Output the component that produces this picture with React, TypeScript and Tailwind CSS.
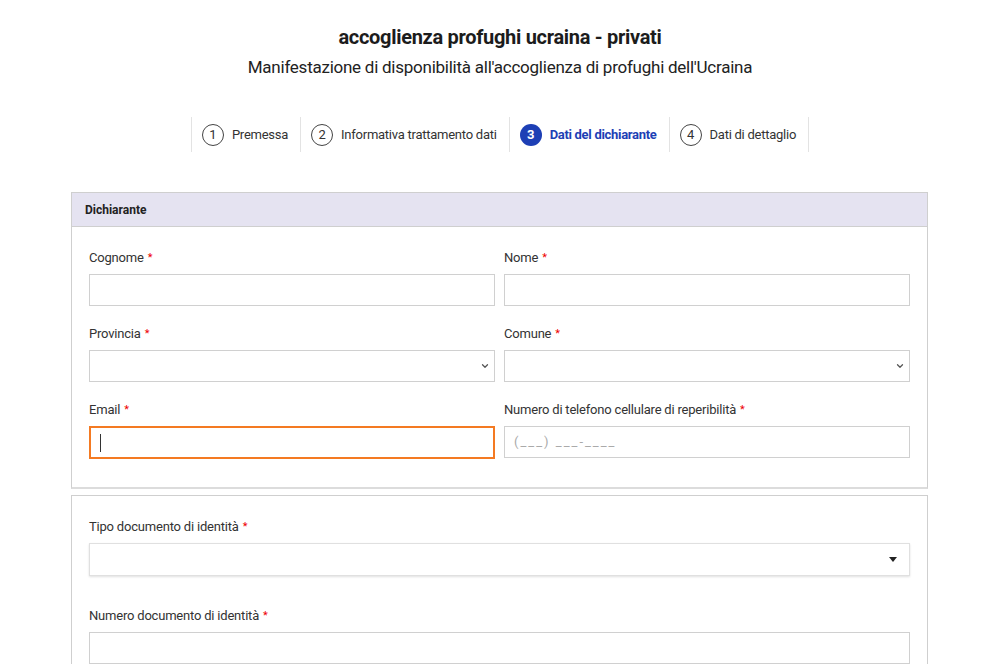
import { ChevronDown } from "lucide-react";

const font = { fontFamily: "Roboto, 'Noto Sans', sans-serif" };

const steps = [
  { n: 1, label: "Premessa" },
  { n: 2, label: "Informativa trattamento dati" },
  { n: 3, label: "Dati del dichiarante", active: true },
  { n: 4, label: "Dati di dettaglio" },
];

function Label({ text }: { text: string }) {
  return (
    <label className="block h-4 mb-2 text-[13px] leading-4 text-[#333] tracking-[-0.2px]">
      {text}
      <span className="ml-1 text-[#e00] text-[11px] align-top">*</span>
    </label>
  );
}

function Input({ focus, placeholder }: { focus?: boolean; placeholder?: string }) {
  if (focus) {
    return (
      <div className="h-[33px] border-2 border-[#f47a22] flex items-center pl-[9px]">
        <span className="w-px h-[18px] bg-[#333]" />
      </div>
    );
  }
  return (
    <div className="h-8 border border-[#d0d0d0] flex items-center pl-[9px] text-[13px] text-[#aaa] tracking-[2px]">
      {placeholder}
    </div>
  );
}

function Select() {
  return (
    <div className="h-8 border border-[#d0d0d0] flex items-center justify-end pr-1">
      <ChevronDown size={10} strokeWidth={3} className="text-[#555]" />
    </div>
  );
}

function Field({ label, children }: { label: string; children: React.ReactNode }) {
  return (
    <div className="flex-1 min-w-0">
      <Label text={label} />
      {children}
    </div>
  );
}

export default function App() {
  return (
    <div className="min-h-[668px] bg-white text-[#222]" style={font}>
      <div className="pt-[26px] text-center">
        <h1 className="text-[20px] leading-[22px] font-bold text-[#1c1c1c] tracking-[-0.3px]">
          accoglienza profughi ucraina - privati
        </h1>
        <p className="mt-[8px] text-[17px] leading-[22px] text-[#222] tracking-[-0.25px]">
          Manifestazione di disponibilità all'accoglienza di profughi dell'Ucraina
        </p>
      </div>

      <div className="mt-[39px] flex justify-center">
        <div className="flex h-[35px] border-r border-[#e3e3e3]">
          {steps.map((s) => (
            <div key={s.n} className="flex items-center gap-2 pl-[10px] pr-[12px] border-l border-[#e3e3e3]">
              <span
                className={
                  s.active
                    ? "w-[22px] h-[22px] rounded-full bg-[#1d3fb5] text-white text-[13px] font-bold flex items-center justify-center"
                    : "w-[22px] h-[22px] rounded-full border border-[#444] text-[#333] text-[13px] flex items-center justify-center"
                }
              >
                {s.n}
              </span>
              <span
                className={
                  s.active
                    ? "text-[13px] font-bold text-[#1d3fb5] tracking-[-0.3px]"
                    : "text-[13px] text-[#333] tracking-[-0.25px]"
                }
              >
                {s.label}
              </span>
            </div>
          ))}
        </div>
      </div>

      <div className="mt-[40px] ml-[71px] w-[857px]">
        <section className="border border-[#cfcfcf] border-b-2 border-b-[#dcdcdc]">
          <div className="h-[34px] bg-[#e5e3f1] border-b border-[#cfcfcf] flex items-center px-[13px] text-[12px] font-bold text-[#222]">
            Dichiarante
          </div>
          <div className="px-[17px] pt-[23px] pb-[28px] flex flex-col gap-5">
            <div className="flex gap-[9px]">
              <Field label="Cognome">
                <Input />
              </Field>
              <Field label="Nome">
                <Input />
              </Field>
            </div>
            <div className="flex gap-[9px]">
              <Field label="Provincia">
                <Select />
              </Field>
              <Field label="Comune">
                <Select />
              </Field>
            </div>
            <div className="flex gap-[9px]">
              <Field label="Email">
                <Input focus />
              </Field>
              <Field label="Numero di telefono cellulare di reperibilità">
                <Input placeholder="(___) ___-____" />
              </Field>
            </div>
          </div>
        </section>

        <section className="mt-[6px] border border-[#cfcfcf] border-b-0 px-[17px] pt-[23px]">
          <Label text="Tipo documento di identità" />
          <div className="h-[33px] border border-[#e0e0e0] shadow-[0_1px_2px_rgba(0,0,0,0.12)] flex items-center justify-end pr-[12px]">
            <span className="w-0 h-0 border-l-4 border-r-4 border-t-[5px] border-l-transparent border-r-transparent border-t-[#222]" />
          </div>
          <div className="mt-[32px]">
            <Label text="Numero documento di identità" />
            <div className="h-8 border border-[#d0d0d0]" />
          </div>
        </section>
      </div>
    </div>
  );
}
